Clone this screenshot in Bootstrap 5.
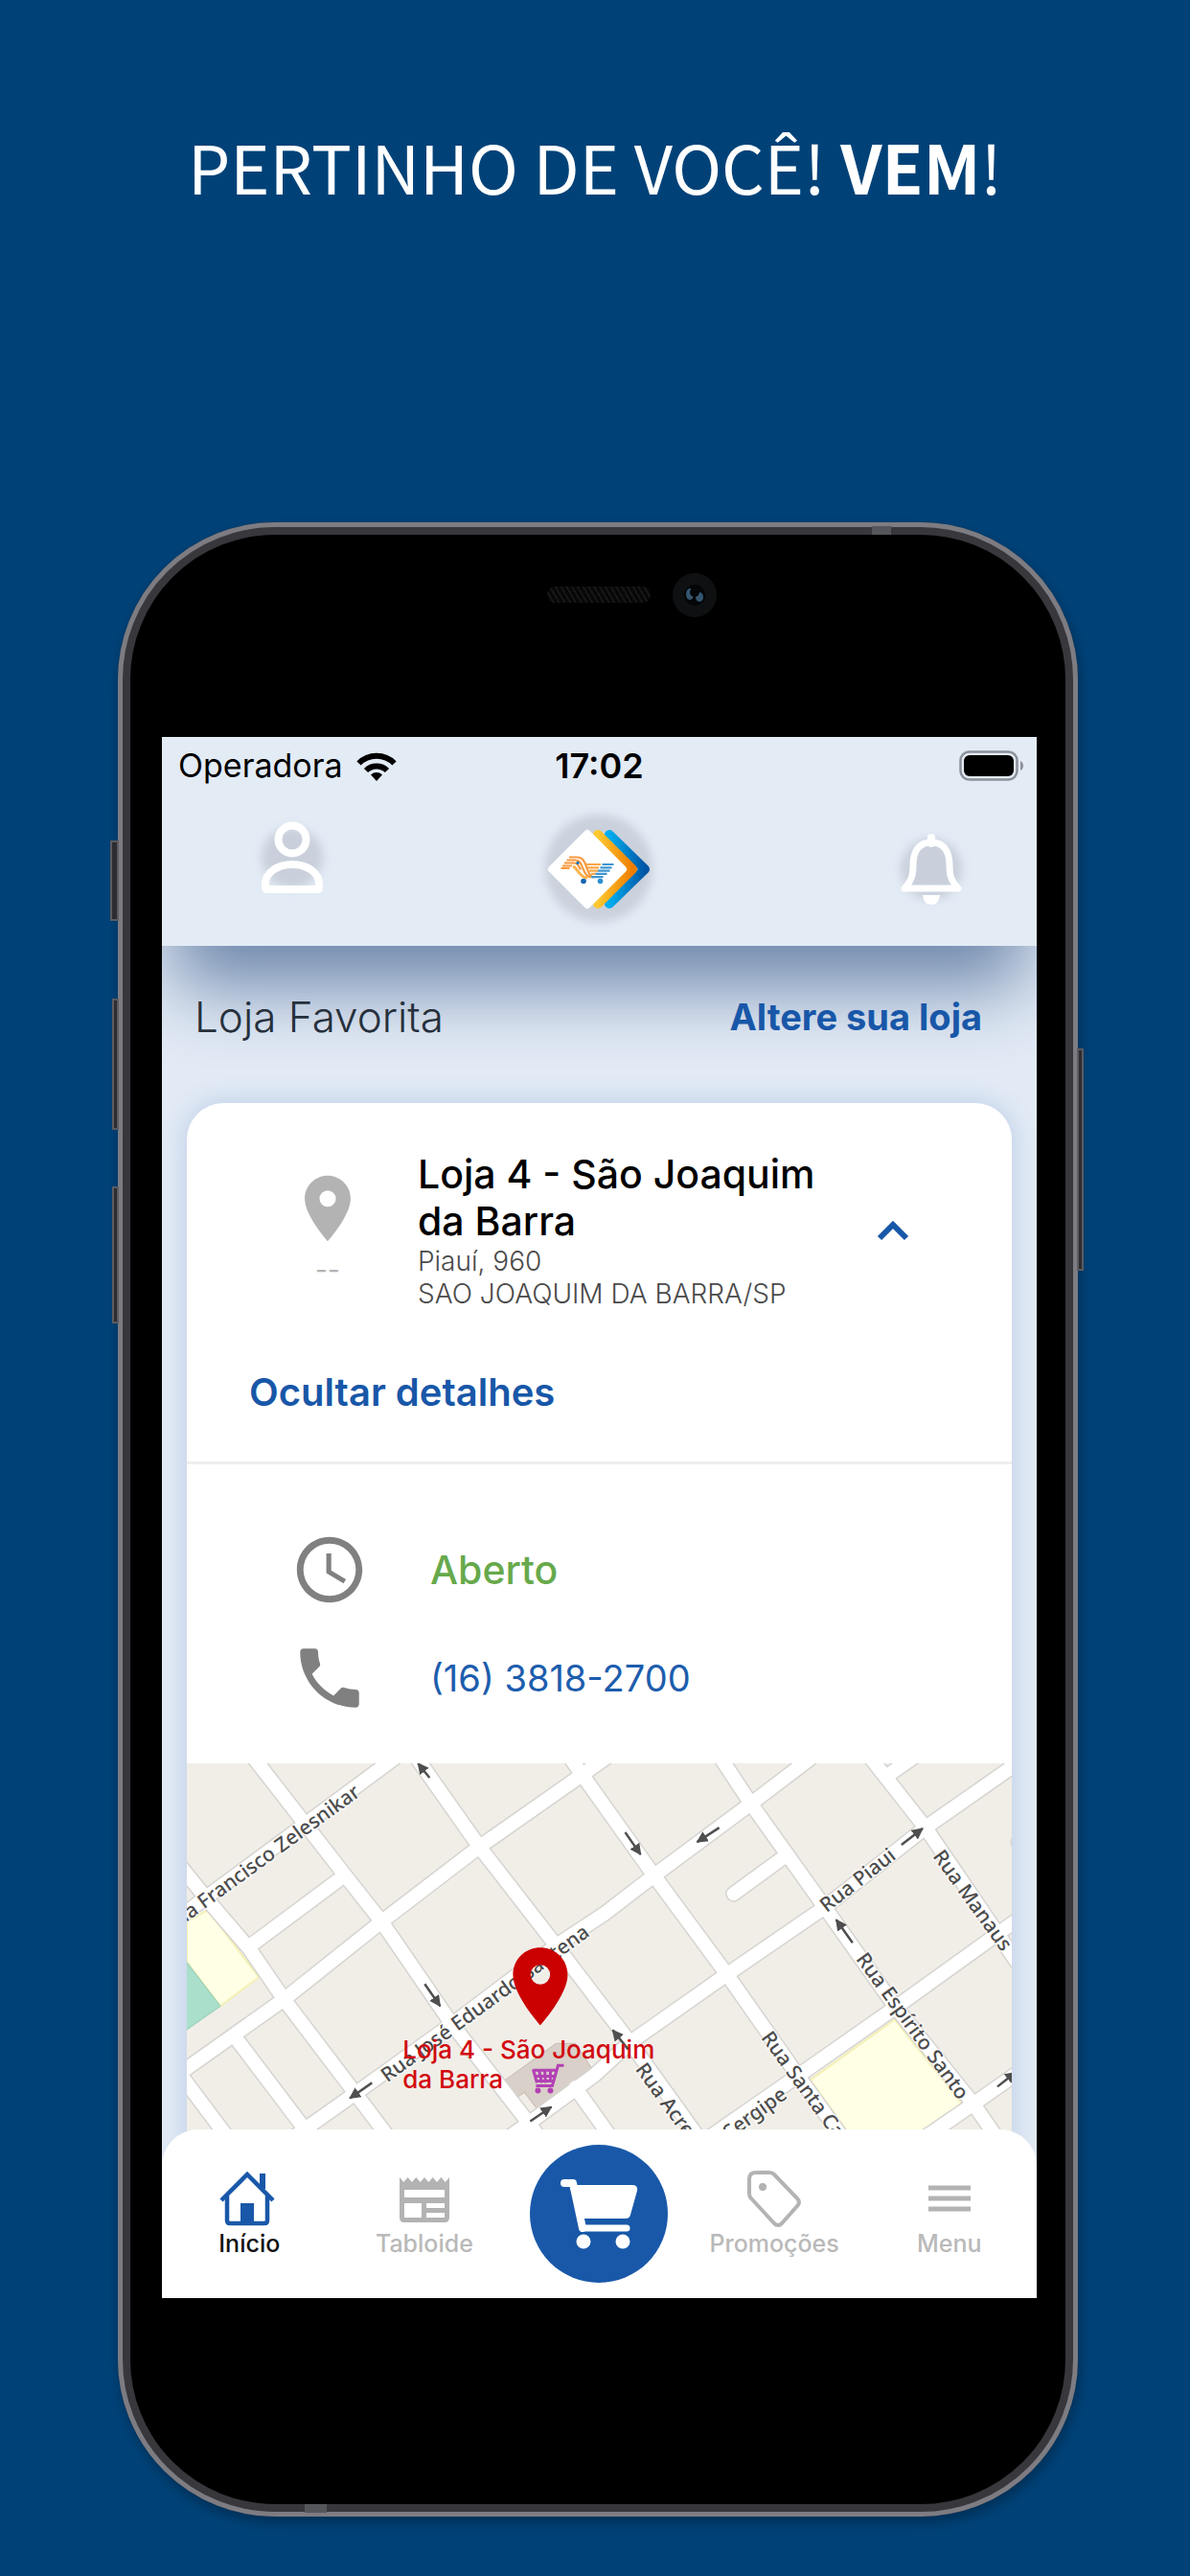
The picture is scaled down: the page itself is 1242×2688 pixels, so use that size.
<!DOCTYPE html>
<html lang="pt-BR">
<head>
<meta charset="utf-8">
<meta name="viewport" content="width=device-width, initial-scale=1">
<title>Pertinho de você</title>
<link href="https://cdn.jsdelivr.net/npm/bootstrap@5.3.0/dist/css/bootstrap.min.css" rel="stylesheet">
<style>
  body { background: #004278; font-family: Inter, "Open Sans", sans-serif; color: #000; }
  .promo { padding: 123px 16px 62px; }
  .promo-title { font: 400 70px/100px "Noto Sans CJK JP", "Noto Sans", sans-serif; margin-bottom: 322px; }
  .promo-title b { font-weight: 700; }

  .phone-stage { padding-left: 6px; }
  .phone { width: 84%; max-width: 1002px; background: #000; border: 13px solid #37373c; border-radius: 164px;
    padding: 211px 30px 215px 33px; box-shadow: 2px 6px 14px rgba(0,0,0,.3); }
  .phone::before { content: ""; position: absolute; inset: -13px; border: 5px solid #7d7c82; border-radius: 164px; }
  .side-key { position: absolute; width: 7px; background: #2c2c31; border: 2px solid #5b5b60; }
  .key-mute { left: -21px; width: 9px; top: 319px; height: 84px; }
  .key-up { left: -19px; top: 484px; height: 137px; }
  .key-down { left: -19px; top: 680px; height: 143px; }
  .key-power { right: -19px; top: 536px; height: 232px; }
  .antenna { position: absolute; background: #55565b; }
  .ant-top { top: -9px; right: 182px; width: 20px; height: 9px; }
  .ant-bottom { bottom: -9px; left: 182px; width: 23px; height: 9px; }
  .speaker { position: absolute; top: 54px; left: 435px; width: 108px; height: 17px; border-radius: 8px;
    background: repeating-linear-gradient(60deg, #161616 0 2px, #070707 2px 5px); }
  .camera { position: absolute; top: 40px; left: 566px; }

  .screen { background: #e2eaf5; overflow: hidden; }
  .app-head { background: #e3ebf5; position: relative; z-index: 2; box-shadow: 0 54px 78px -12px #6c86aa; }
  .status-row { height: 60px; font-size: 34px; line-height: 60px; }
  .status-row .cell-start { padding-left: 17px; gap: 14px; }
  .status-row .cell-end { padding-right: 13px; }
  .clock-text { font-size: 36px; font-weight: 600; }
  .brand-row { height: 158px; }
  .brand-row .cell-start { padding-left: 76px; }
  .brand-row .cell-end { padding-right: 50px; }
  .plain-btn { background: none; border: 0; padding: 0; }
  .plain-btn svg, .cell svg { display: block; }

  .fav-row { height: 164px; padding: 0 57px 16px 34px; position: relative; z-index: 3; }
  .fav-title { font-size: 44px; font-weight: 300; color: #26303c; margin: 0; line-height: 48px; }
  .fav-link { font-size: 38px; font-weight: 700; color: #1857a8; line-height: 48px; text-decoration: none; }

  .store { margin: 0 26px; border: 0; border-radius: 38px 38px 0 0; position: relative; z-index: 3;
    box-shadow: 0 0 26px 2px #bfd0e8; overflow: hidden; }
  .store-head { padding: 50px 106px 0 99px; gap: 46px; }
  .pin-col { width: 96px; color: #b3b3b3; font-size: 28px; line-height: 34px; padding-top: 19px; }
  .pin-col svg { margin-bottom: 6px; }
  .store-name { font-size: 41px; line-height: 49px; font-weight: 500; margin: 0; }
  .store-text { max-width: 440px; }
  .store-addr { font-size: 28px; line-height: 34px; font-weight: 300; color: #4a4a4a; margin: 0; }
  .toggle-row { padding: 62px 65px 48px; border-bottom: 3px solid #eee; }
  .toggle-link { font-size: 40px; line-height: 48px; font-weight: 600; color: #1857a8; }
  .info-list { padding: 69px 108px 48px; gap: 31px; margin: 0; }
  .info-list li { gap: 64px; font-size: 38px; line-height: 48px; }
  .open-now { color: #67a94c; font-weight: 500; font-size: 41px; }
  .tel { color: #1d5dad; text-decoration: none; font-weight: 400; }
  .map-view { height: 420px; width: 100%; display: block; background: #f1eee8; }
  .street { font: 500 21px "Noto Sans", sans-serif; fill: #4c4c4c; stroke: #fff; stroke-width: 3px; stroke-opacity: .6; paint-order: stroke; }
  .map-pin-label { font: 500 26px Inter, sans-serif; fill: #d10a10; }

  .tab-bar { height: 176px; margin-top: -38px; background: #fff; border-radius: 38px 38px 0 0; position: relative; z-index: 4; }
  .tab-item { color: #b9b9b9; font-size: 25px; line-height: 30px; font-weight: 500; text-decoration: none; }
  .tab-item.current { color: #111; }
  .cart-btn { width: 144px; height: 144px; border-radius: 50%; background: #1958a9; border: 0; padding: 0; }
</style>
<script src="https://cdn.jsdelivr.net/npm/bootstrap@5.3.0/dist/js/bootstrap.bundle.min.js"></script>
</head>
<body>
<main class="promo">
  <h1 class="promo-title text-white text-center">PERTINHO DE VOCÊ! <b>VEM</b>!</h1>

  <div class="phone-stage">
  <div class="phone mx-auto position-relative">
    <span class="side-key key-mute"></span><span class="side-key key-up"></span>
    <span class="side-key key-down"></span><span class="side-key key-power"></span>
    <span class="antenna ant-top"></span><span class="antenna ant-bottom"></span>
    <span class="speaker"></span>
    <svg class="camera" width="46" height="46" viewBox="0 0 46 46" aria-hidden="true"><circle cx="23" cy="23" r="23" fill="#0f1011"/><circle cx="23" cy="23" r="11" fill="#050608"/><ellipse cx="18" cy="22" rx="4" ry="6" fill="#35566f"/><ellipse cx="28" cy="25" rx="4" ry="5" fill="#35566f"/><circle cx="23" cy="20" r="5" fill="#050608"/></svg>

    <div class="screen d-flex flex-column">
      <header class="app-head">
        <div class="status-row row g-0">
          <div class="cell cell-start col-4 d-flex align-items-center">
            <span>Operadora</span>
            <svg width="42" height="31" viewBox="0 0 42 31" aria-label="Wi-Fi"><g fill="none" stroke="#000" stroke-width="6"><path d="M2.500 12.500a26 26 0 0 1 37 0"/><path d="M10 20a15.500 15.500 0 0 1 22 0"/></g><path d="M21 31l-6-6.500a8.500 8.500 0 0 1 12 0z"/></svg>
          </div>
          <div class="clock-text col-4 text-center">17:02</div>
          <div class="cell cell-end col-4 d-flex align-items-center justify-content-end">
            <svg width="68" height="32" viewBox="0 0 68 32" aria-label="Bateria"><rect x="1.500" y="1.500" width="59" height="29" rx="9" fill="none" stroke="#8d9199" stroke-width="2.500"/><rect x="5" y="5" width="52" height="22" rx="6"/><path d="M64 11v10q3-1.500 3-5t-3-5z" fill="#8d9199"/></svg>
          </div>
        </div>
        <div class="brand-row row g-0 align-items-center">
          <div class="cell-start col-4">
            <button class="plain-btn" type="button" aria-label="Perfil">
              <svg width="120" height="120" viewBox="0 0 120 120"><defs><filter id="soft" x="-30%" y="-30%" width="160%" height="160%"><feGaussianBlur stdDeviation="5"/></filter></defs><circle cx="60" cy="50" r="32" fill="#c9d0dc" filter="url(#soft)"/><g fill="none" stroke="#fff" stroke-width="8"><circle cx="60" cy="31" r="14.500"/><path d="M32 81v-4c0-11 12-20 28-20s28 9 28 20v4q0 2-2 2H34q-2 0-2-2z" stroke-linejoin="round"/></g></svg>
            </button>
          </div>
          <div class="cell col-4 d-flex justify-content-center">
            <svg width="140" height="140" viewBox="0 0 140 140" aria-label="Logo">
              <defs><linearGradient id="lo" x1="0" y1="0" x2="1" y2="0"><stop offset="0" stop-color="#fdc82f"/><stop offset="1" stop-color="#f07d00"/></linearGradient><linearGradient id="lb" x1="0" y1="0" x2="1" y2="0"><stop offset="0" stop-color="#00aeef"/><stop offset="1" stop-color="#0055a5"/></linearGradient></defs>
              <circle cx="70" cy="68" r="56" fill="#cbd1dc" filter="url(#soft)"/>
              <path d="M81 33l37 36-37 36" fill="none" stroke="url(#lb)" stroke-width="10" stroke-linecap="round" stroke-linejoin="round"/>
              <path d="M69 33l36 36-36 36" fill="none" stroke="url(#lo)" stroke-width="10" stroke-linecap="round" stroke-linejoin="round"/>
              <path d="M58 32l37 37-37 37-37-37z" fill="#fff" stroke="#fff" stroke-width="8" stroke-linejoin="round"/>
              <g fill="none" stroke-width="2.200">
                <path d="M39 56.500h8c6 0 8 4 10 10s4 11 8 11h-1M36.500 59.500h9c5 0 6 4 8 9s4 9 8 9M34 62.500h10c4 0 5 3 7 7M32 65.500h10M30.500 68h9" stroke="#f79a3e"/>
                <path d="M43 66c5 2 7 12 15 12" stroke="#fbb34c" stroke-width="3"/>
                <path d="M56 64h16M58 67.300h12M60 70.600h9M62 73.900h5" stroke="#f9a648"/>
                <path d="M73.500 64h12M71.500 67.300h12M69 70.600h12.500M66.500 73.900h12M62 77.200h12.500" stroke="#3f96d2"/>
              </g>
              <circle cx="48" cy="62.500" r="1.700" fill="#1b75bb"/><circle cx="54" cy="81.500" r="2.800" fill="#1664ae"/><circle cx="71.500" cy="81.500" r="2.800" fill="#2a8fd0"/>
            </svg>
          </div>
          <div class="cell-end col-4 d-flex justify-content-end">
            <button class="plain-btn" type="button" aria-label="Notificações">
              <svg width="120" height="120" viewBox="0 0 120 120"><circle cx="60" cy="59" r="32" fill="#c9d0dc" filter="url(#soft)"/><path d="M60 26v6" stroke="#fff" stroke-width="8" stroke-linecap="round"/><path d="M32 79c7-8 9-13 9-24 0-16 7-24 19-24s19 8 19 24c0 11 2 16 9 24z" fill="none" stroke="#fff" stroke-width="7" stroke-linejoin="round"/><path d="M51 86h18q-1 10-9 10t-9-10z" fill="#fff"/></svg>
            </button>
          </div>
        </div>
      </header>

      <div class="fav-row d-flex align-items-center justify-content-between">
        <h2 class="fav-title">Loja Favorita</h2>
        <a class="fav-link" href="#lojas">Altere sua loja</a>
      </div>

      <section class="store card">
        <div class="store-head d-flex">
          <div class="pin-col text-center flex-shrink-0">
            <svg width="82" height="82" viewBox="0 0 24 24" fill="#b3b3b3" aria-hidden="true"><path d="M12 2C8.130 2 5 5.130 5 9c0 5.250 7 13 7 13s7-7.750 7-13c0-3.870-3.130-7-7-7zm0 9.500a2.500 2.500 0 1 1 0-5 2.500 2.500 0 0 1 0 5z"/></svg>
            <div>--</div>
          </div>
          <div class="store-text flex-grow-1">
            <h3 class="store-name">Loja 4 - São Joaquim da Barra</h3>
            <p class="store-addr">Piauí, 960<br>SAO JOAQUIM DA BARRA/SP</p>
          </div>
          <button class="plain-btn ms-auto align-self-center" type="button" aria-label="Recolher">
            <svg width="36" height="26" viewBox="0 0 36 26"><path d="M4 21L18 7l14 14" fill="none" stroke="#1857a8" stroke-width="6"/></svg>
          </button>
        </div>
        <div class="toggle-row d-flex"><button class="plain-btn toggle-link" type="button">Ocultar detalhes</button></div>
        <ul class="info-list list-unstyled d-flex flex-column">
          <li class="d-flex align-items-center">
            <svg width="82" height="82" viewBox="0 0 24 24" fill="#808080" aria-hidden="true"><path d="M11.990 2C6.470 2 2 6.480 2 12s4.470 10 9.990 10C17.520 22 22 17.520 22 12S17.520 2 11.990 2zM12 20a8 8 0 1 1 0-16 8 8 0 0 1 0 16z"/><path d="M12.500 7H11v6l5.250 3.150.750-1.230-4.500-2.670z"/></svg>
            <span class="open-now">Aberto</span>
          </li>
          <li class="d-flex align-items-center">
            <svg width="82" height="82" viewBox="0 0 24 24" fill="#808080" aria-hidden="true"><path d="M6.620 10.790c1.440 2.830 3.760 5.140 6.590 6.590l2.200-2.200c.27-.27.67-.36 1.020-.24 1.120.37 2.330.57 3.570.57.55 0 1 .45 1 1V20c0 .55-.45 1-1 1-9.390 0-17-7.610-17-17 0-.55.45-1 1-1h3.500c.55 0 1 .45 1 1 0 1.250.2 2.450.57 3.570.11.35.03.74-.25 1.020l-2.200 2.200z"/></svg>
            <a class="tel" href="tel:1638182700">(16) 3818-2700</a>
          </li>
        </ul>
        <svg class="map-view" viewBox="0 0 860 420" preserveAspectRatio="xMidYMin slice" role="img" aria-label="Mapa da loja">
          <defs>
            <g id="roads" fill="none" stroke-linecap="round" stroke-linejoin="round">
              <path d="M-10 162L220-8M65 191L163 118M-10 325L100 247 203 165 305 87 412 12 440-8M70 420L125 380 180 341 275 273 385 190 435 157 487 117 588 42 650-5M300 415L355 376 425 325 462 291 563 220 665 150 770 67 870-3M500 420L550 386 638 325 738 255 870 160M720 422L775 386 820 355 870 320M730 13L760-8M570 136L622 98M867 82h10"/>
              <path d="M-10 103L22 143 65 193 102 247 178 347 233 420M68-8L162 113 203 165 275 270 355 373 390 420M238-8L305 87 385 190 465 295 555 420M398-8L487 117 563 220 638 327 705 420M555-8L588 42 665 150 738 253 820 355 865 420M711-8L770 67 870 214M50 285L122 380M-10 320L65 420M405 338L460 415"/>
            </g>
            <marker id="tip" viewBox="0 0 10 10" refX="9" refY="5" markerWidth="12" markerHeight="12" markerUnits="userSpaceOnUse" orient="auto"><path d="M0 0l10 5-10 5z" fill="#4f4f4f"/></marker>
          </defs>
          <path d="M0 165L22 153 75 223 35 253 0 207zM650 330L738 267 808 355 772 382 720 420 712 420 687 382z" fill="#ffffe5" stroke="#f3f0b4" stroke-width="2"/>
          <path d="M-2 205L35 253-2 279z" fill="#aadfcb" stroke="#97cfb9"/>
          <path d="M332 330L385 292h20L422 318 365 360 352 343 343 349z" fill="#d9d0c9" stroke="#c9bdb4"/>
          <use href="#roads" stroke="#d6d4d0" stroke-width="17"/>
          <use href="#roads" stroke="#fff" stroke-width="14"/>
          <g stroke="#4f4f4f" stroke-width="2.500" fill="none">
            <path marker-end="url(#tip)" d="M253 15L241 0"/><path marker-end="url(#tip)" d="M248 230L264 253"/><path marker-end="url(#tip)" d="M193 333L170 349"/><path marker-end="url(#tip)" d="M358 373L380 358"/><path marker-end="url(#tip)" d="M457 72L473 95"/><path marker-end="url(#tip)" d="M555 67L532 82"/><path marker-end="url(#tip)" d="M745 85L767 68"/><path marker-end="url(#tip)" d="M694 187L677 163"/><path marker-end="url(#tip)" d="M460 298L444 278"/><path marker-end="url(#tip)" d="M845 337L864 322"/>
          </g>
          <g class="street">
            <text transform="translate(182 33) rotate(-36)" text-anchor="end">Rua Francisco Zelesnikar</text>
            <text transform="translate(209 333) rotate(-36)">Rua José Eduardo Santena</text>
            <text transform="translate(667 156) rotate(-38)">Rua Piaui</text>
            <text transform="translate(777 97) rotate(54)">Rua Manaus</text>
            <text transform="translate(697 204) rotate(54)">Rua Espírito Santo</text>
            <text transform="translate(467 319) rotate(54)">Rua Acre</text>
            <text transform="translate(598 286) rotate(54)">Rua Santa Catarina</text>
            <text transform="translate(627 348) rotate(-36)" text-anchor="end">Rua Sergipe</text>
          </g>
          <g fill="none" stroke="#b341b5" stroke-width="3"><path d="M393 315h-6l-6 21h-17M361 320h24M363 326h20M365 331h17M361 319l4 14M367 319l3 14M373 319l1 14M379 319v13"/><circle cx="366" cy="341" r="1.500"/><circle cx="379" cy="341" r="1.500"/></g>
          <path d="M368.500 192c-16 0-28.500 12.500-28.500 28.500 0 21 28.500 52.500 28.500 52.500s28.500-31.500 28.500-52.500c0-16-12.500-28.500-28.500-28.500zm0 38.500a10.200 10.200 0 1 1 0-20.400 10.200 10.200 0 0 1 0 20.400z" fill="#cb0000"/>
          <text class="map-pin-label" x="225" y="308">Loja 4 - São Joaquim</text>
          <text class="map-pin-label" x="225" y="339">da Barra</text>
        </svg>
      </section>

      <nav class="tab-bar row g-0 align-items-center text-center" aria-label="Principal">
        <a class="tab-item current col" href="#inicio">
          <svg class="d-block mx-auto" width="62" height="62" viewBox="0 0 62 62" fill="none" stroke="#1958a9"><path d="M2 32L29 5l27 27" stroke-width="4.500"/><path d="M8 27v26q0 3 3 3h36q3 0 3-3V27" stroke-width="4.500"/><path d="M45 20V4" stroke-width="6"/><path d="M22 35h14v20H22z" fill="#1958a9" stroke="none"/></svg>
          Início</a>
        <a class="tab-item col" href="#tabloide">
          <svg class="d-block mx-auto" width="62" height="62" viewBox="0 0 62 62" fill="#b3b3b3"><path fill-rule="evenodd" d="M5 8l4.300 5 4.300-5 4.300 5 4.400-5 4.300 5L31 8l4.400 5 4.300-5 4.300 5 4.400-5 4.300 5L57 8v42q0 5-5 5H10q-5 0-5-5zm5 13v8h42v-8zm0 14v15h18V35zm23 0v5h19v-5zm0 10v5h19v-5z"/></svg>
          Tabloide</a>
        <div class="col d-flex justify-content-center">
          <button class="cart-btn" type="button" aria-label="Carrinho">
            <svg class="d-block mx-auto" width="90" height="84" viewBox="0 0 90 84" fill="#fff"><path d="M9 10h9l10 47" fill="none" stroke="#fff" stroke-width="8" stroke-linecap="round" stroke-linejoin="round"/><path d="M14 12h66q6 0 5 6l-7 25q-1 4-5 4H25z"/><path d="M28 57h46" stroke="#fff" stroke-width="7" stroke-linecap="round"/><circle cx="29" cy="71" r="7.500"/><circle cx="70" cy="71" r="7.500"/></svg>
          </button>
        </div>
        <a class="tab-item col" href="#promocoes">
          <svg class="d-block mx-auto" width="62" height="62" viewBox="0 0 62 62" fill="none" stroke="#b3b3b3" stroke-width="4"><path d="M5 10q0-7 7-7h14q3 0 5 2l24 25q4 4 0 8L39 56q-4 4-8 0L7 30q-2-2-2-5z" stroke-linejoin="round"/><circle cx="19" cy="18" r="4" fill="#b3b3b3" stroke="none"/></svg>
          Promoções</a>
        <a class="tab-item col" href="#menu">
          <svg class="d-block mx-auto" width="62" height="62" viewBox="0 0 62 62" stroke="#b3b3b3" stroke-width="5"><path d="M9 19h44M9 30h44M9 41h44"/></svg>
          Menu</a>
      </nav>
    </div>
  </div>
  </div>
</main>
</body>
</html>
